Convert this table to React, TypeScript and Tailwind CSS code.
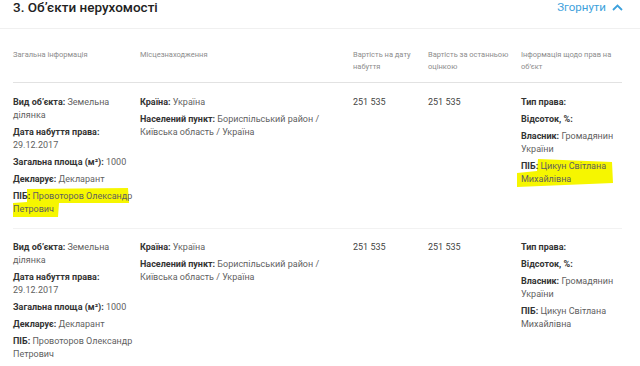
import React from 'react';

interface Field {
  label: string;
  value?: React.ReactNode;
}

interface PropertyRow {
  general: Field[];
  location: Field[];
  costAcquired: string;
  costLast: string;
  rights: Field[];
  marked?: boolean;
}

const rows: PropertyRow[] = [
  {
    general: [
      { label: 'Вид об\u2019єкта:', value: 'Земельна ділянка' },
      { label: 'Дата набуття права:', value: '29.12.2017' },
      { label: 'Загальна площа (м²):', value: '1000' },
      { label: 'Декларує:', value: 'Декларант' },
      { label: 'ПІБ:', value: 'Провоторов Олександр Петрович' },
    ],
    location: [
      { label: 'Країна:', value: 'Україна' },
      { label: 'Населений пункт:', value: 'Бориспільський район / Київська область / Україна' },
    ],
    costAcquired: '251 535',
    costLast: '251 535',
    rights: [
      { label: 'Тип права:' },
      { label: 'Відсоток, %:' },
      { label: 'Власник:', value: 'Громадянин України' },
      { label: 'ПІБ:', value: 'Цикун Світлана Михайлівна' },
    ],
    marked: true,
  },
  {
    general: [
      { label: 'Вид об\u2019єкта:', value: 'Земельна ділянка' },
      { label: 'Дата набуття права:', value: '29.12.2017' },
      { label: 'Загальна площа (м²):', value: '1000' },
      { label: 'Декларує:', value: 'Декларант' },
      { label: 'ПІБ:', value: 'Провоторов Олександр Петрович' },
    ],
    location: [
      { label: 'Країна:', value: 'Україна' },
      { label: 'Населений пункт:', value: 'Бориспільський район / Київська область / Україна' },
    ],
    costAcquired: '251 535',
    costLast: '251 535',
    rights: [
      { label: 'Тип права:' },
      { label: 'Відсоток, %:' },
      { label: 'Власник:', value: 'Громадянин України' },
      { label: 'ПІБ:', value: 'Цикун Світлана Михайлівна' },
    ],
  },
];

const FieldList: React.FC<{ fields: Field[] }> = ({ fields }) => (
  <div className="relative flex flex-col gap-[4px]">
    {fields.map((f, i) => (
      <p key={i} className="leading-[13px] text-[#5f5f5f]">
        <b className="font-bold text-[#333]">{f.label}</b>
        {f.value !== undefined && <> {f.value}</>}
      </p>
    ))}
  </div>
);

// marker strokes someone drew over the screenshot
const MarkGeneral = () => (
  <svg className="absolute left-0 top-0 overflow-visible" width="1" height="1">
    <polygon points="14,93 115,92 116,107 46,107 45,121 0,121 0,107 14,106" fill="#f6f600" />
  </svg>
);

const MarkRights = () => (
  <svg className="absolute left-0 top-0 overflow-visible" width="1" height="1">
    <polygon points="17,63 91,66 92,87 -4,91 -4,77 16,75" fill="#f6f600" />
  </svg>
);

export default function App() {
  return (
    <div className="w-[640px] h-[366px] overflow-hidden bg-white font-['Roboto',sans-serif]">
      <div className="flex justify-between items-start h-[29px] border-b border-[#f0f0f0] pl-[13px] pr-[17px]">
        <h2 className="text-[13.5px] leading-[15px] font-medium text-[#222]">3. Об’єкти нерухомості</h2>
        <button className="flex items-center gap-[6px] text-[11.5px] leading-[14px] text-[#3da1dc]">
          Згорнути
          <svg width="11" height="7" viewBox="0 0 11 7" fill="none" stroke="#3da1dc" strokeWidth="1.8">
            <path d="M1 6l4.5-4.5L10 6" />
          </svg>
        </button>
      </div>

      <div className="pl-[13px] pr-[18px]">
        <div className="grid grid-cols-[127px_213px_75px_93px_101px] border-b border-[#e2e2e2] pt-[20px] pb-[9px] text-[7.5px] leading-[12px] text-[#8c8c8c]">
          <div>Загальна інформація</div>
          <div>Місцезнаходження</div>
          <div className="pr-[8px]">Вартість на дату набуття</div>
          <div className="pr-[10px]">Вартість за останньою оцінкою</div>
          <div>Інформація щодо прав на об’єкт</div>
        </div>

        {rows.map((r, i) => (
          <div
            key={i}
            className="grid grid-cols-[127px_213px_75px_93px_101px] border-b border-[#f2f2f2] pt-[12.5px] pb-[12px] text-[9px]"
          >
            <div className="relative">
              {r.marked && <MarkGeneral />}
              <FieldList fields={r.general} />
            </div>
            <div className="pr-[28px]">
              <FieldList fields={r.location} />
            </div>
            <div className="leading-[13px] text-[#444]">{r.costAcquired}</div>
            <div className="leading-[13px] text-[#444]">{r.costLast}</div>
            <div className="relative">
              {r.marked && <MarkRights />}
              <FieldList fields={r.rights} />
            </div>
          </div>
        ))}
      </div>
    </div>
  );
}
